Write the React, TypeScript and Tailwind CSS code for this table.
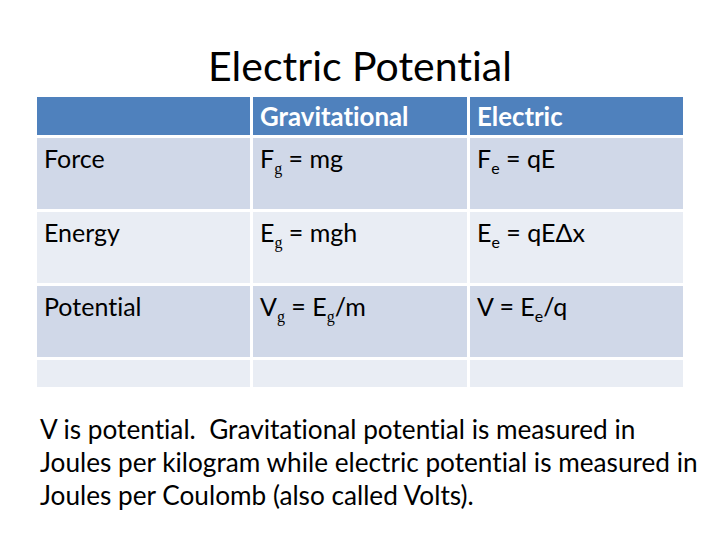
const rows = [
  { label: "Force", grav: ["F", "g", " = mg"], elec: ["F", "e", " = qE"] },
  { label: "Energy", grav: ["E", "g", " = mgh"], elec: ["E", "e", " = qEΔx"] },
];

const Sub = ({ children, serif }: { children: string; serif?: boolean }) => (
  <span
    className={`text-[16px] leading-none relative top-[6px] ${serif ? "font-['Liberation_Serif',serif]" : ""}`}
  >
    {children}
  </span>
);

const Cell = ({ children, tone }: { children?: React.ReactNode; tone: string }) => (
  <div className={`${tone} px-[7px] pt-[4px] text-[25px] leading-[32px] text-black`}>
    {children}
  </div>
);

export default function App() {
  return (
    <div className="w-[720px] h-[540px] bg-white font-['Lato','Noto_Sans',sans-serif] [font-variant-ligatures:none] overflow-hidden">
      <h1 className="pt-[42px] h-[97px] text-center text-[41px] leading-[48px] text-black">
        Electric Potential
      </h1>

      <div className="ml-[37px] grid grid-cols-[213px_214px_213px] grid-rows-[38px_71px_71px_71px_27px] gap-[3px] w-[646px]">
        <div className="bg-[#4f81bd]" />
        <div className="bg-[#4f81bd] px-[7px] pt-[3px] text-[25.8px] leading-[32px] font-bold text-white">
          Gravitational
        </div>
        <div className="bg-[#4f81bd] px-[7px] pt-[3px] text-[25.8px] leading-[32px] font-bold text-white">
          Electric
        </div>

        {rows.map((r, i) => {
          const tone = i % 2 === 0 ? "bg-[#d0d8e8]" : "bg-[#e9edf4]";
          return [
            <Cell key={r.label + "a"} tone={tone}>
              {r.label}
            </Cell>,
            <Cell key={r.label + "b"} tone={tone}>
              {r.grav[0]}
              <Sub serif>{r.grav[1]}</Sub>
              {r.grav[2]}
            </Cell>,
            <Cell key={r.label + "c"} tone={tone}>
              {r.elec[0]}
              <Sub>{r.elec[1]}</Sub>
              {r.elec[2]}
            </Cell>,
          ];
        })}

        <Cell tone="bg-[#d0d8e8]">Potential</Cell>
        <Cell tone="bg-[#d0d8e8]">
          V<Sub serif>g</Sub> = E<Sub serif>g</Sub>/m
        </Cell>
        <Cell tone="bg-[#d0d8e8]">
          V = E<Sub>e</Sub>/q
        </Cell>

        <div className="bg-[#e9edf4]" />
        <div className="bg-[#e9edf4]" />
        <div className="bg-[#e9edf4]" />
      </div>

      <p className="ml-[40px] mt-[26px] w-[675px] text-[26.2px] leading-[33px] text-black whitespace-pre-wrap">
        {"V is potential.  Gravitational potential is measured in\nJoules per kilogram while electric potential is measured in\nJoules per Coulomb (also called Volts)."}
      </p>
    </div>
  );
}
